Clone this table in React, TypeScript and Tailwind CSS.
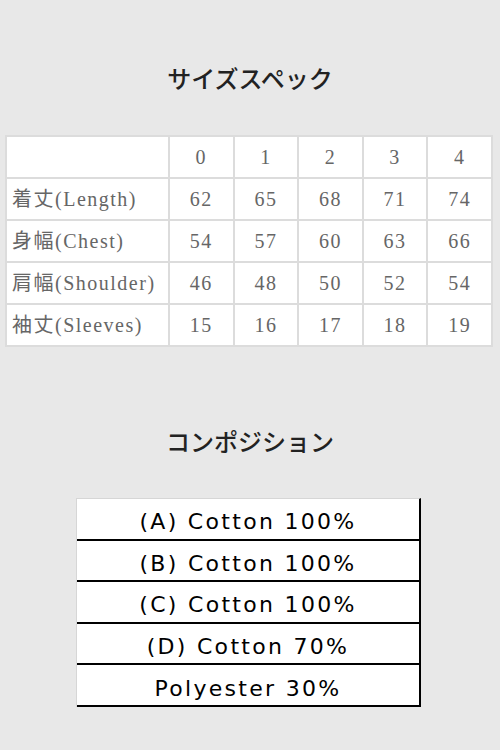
const SIZES = ['0', '1', '2', '3', '4']

const ROWS = [
  { label: '着丈(Length)', values: [62, 65, 68, 71, 74] },
  { label: '身幅(Chest)', values: [54, 57, 60, 63, 66] },
  { label: '肩幅(Shoulder)', values: [46, 48, 50, 52, 54] },
  { label: '袖丈(Sleeves)', values: [15, 16, 17, 18, 19] },
]

const COMPOSITION = [
  '(A) Cotton 100%',
  '(B) Cotton 100%',
  '(C) Cotton 100%',
  '(D) Cotton 70%',
  'Polyester 30%',
]

const cell = 'bg-white h-[40px] flex items-center justify-center'

export default function App() {
  return (
    <div className="w-[500px] h-[750px] bg-[#e8e8e8] flex flex-col items-center overflow-hidden">
      {/* Size spec */}
      <h2 className="mt-[62px] h-[32px] leading-[32px] text-[24px] font-medium text-[#222] font-['Noto_Sans_CJK_JP',sans-serif]">
        サイズスペック
      </h2>

      <div className="mt-[41px] w-[488px] ml-[-2px] grid grid-cols-[161px_repeat(5,1fr)] gap-[2px] p-[2px] bg-[#dcdcdc] text-[20px] text-[#666] tracking-[1.5px] font-['Liberation_Serif','Noto_Sans_CJK_JP',serif]">
        <div className="bg-white h-[40px]" />
        {SIZES.map(s => (
          <div key={s} className={cell}>{s}</div>
        ))}
        {ROWS.map(row => (
          <>
            <div key={row.label} className="bg-white h-[40px] flex items-center pl-[5px] whitespace-nowrap">
              {row.label}
            </div>
            {row.values.map((v, i) => (
              <div key={row.label + i} className={cell}>{v}</div>
            ))}
          </>
        ))}
      </div>

      {/* Composition */}
      <h2 className="mt-[78px] h-[32px] leading-[32px] text-[24px] font-medium text-[#222] font-['Noto_Sans_CJK_JP',sans-serif]">
        コンポジション
      </h2>

      <div className="mt-[41px] w-[345px] ml-[-3px] bg-white border-r-2 border-black border-t border-l border-t-[#d6d6d6] border-l-[#d6d6d6] text-[22px] text-black tracking-[2.3px] font-['DejaVu_Sans',sans-serif]">
        {COMPOSITION.map(line => (
          <div key={line} className="h-[41.6px] pt-[6px] flex items-center justify-center border-b-2 border-black">
            {line}
          </div>
        ))}
      </div>
    </div>
  )
}
